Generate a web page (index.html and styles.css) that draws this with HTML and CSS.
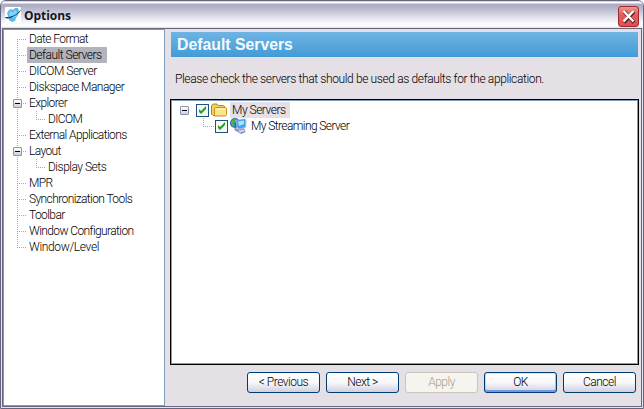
FILE: index.html
```html
<!DOCTYPE html>
<html lang="en">
<head>
<meta charset="utf-8">
<title>Options</title>
<link rel="stylesheet" href="styles.css">
</head>
<body>
<div class="window">
  <header class="titlebar">
    <svg class="logo" width="16" height="16" viewBox="0 0 16 16"><rect width="16" height="16" rx="1" fill="#fff"/><path d="M4 3l2-1 2 1 2-2h3l1 3-1 4-2 3-1 3-3 1-3-2-1-4-1-3z" fill="#59b9ee"/><path d="M5 4l3 2 2-3 2 2-1 5-3 1-4-3z" fill="#83d5fa"/><path d="M0 10c1 3 7 1 11-2 3-2 5-4 5-6-2 4-10 9-14 8-1 0-2 0-2 0z" fill="#15384f"/></svg>
    <h1>Options</h1>
    <button class="close" aria-label="Close"><svg width="21" height="21" viewBox="0 0 21 21"><path d="M6 5.5l10 11M16 5.5l-10 11" stroke="#602027" stroke-width="3.6"/><path d="M5.5 5l10 10.5M15.500 5l-10 10.500" stroke="#fff" stroke-width="2.4"/></svg></button>
  </header>
  <div class="content">
    <ul class="nav">
      <li><span class="tight">Date Format</span></li>
      <li><span class="sel">Default Servers</span></li>
      <li><span>DICOM Server</span></li>
      <li><span>Diskspace Manager</span></li>
      <li><i class="expander"></i><span class="tight">Explorer</span></li>
      <li class="child"><span class="tight">DICOM</span></li>
      <li><span class="tight">External Applications</span></li>
      <li><i class="expander"></i><span class="tight">Layout</span></li>
      <li class="child"><span>Display Sets</span></li>
      <li><span class="tight">MPR</span></li>
      <li><span class="tight">Synchronization Tools</span></li>
      <li><span class="tight">Toolbar</span></li>
      <li><span class="tight">Window Configuration</span></li>
      <li class="last"><span class="loose">Window/Level</span></li>
    </ul>
    <main>
      <h2>Default Servers</h2>
      <p>Please check the servers that should be used as defaults for the application.</p>
      <div class="servers">
        <div class="row root">
          <i class="expander"></i>
          <svg class="check" width="13" height="13" viewBox="0 0 13 13"><rect x=".5" y=".5" width="12" height="12" fill="#f6f6f3" stroke="#1c5180"/><path d="M3 5v3l2 2 5-5V2L5 7z" fill="#21a121"/></svg>
          <svg class="folder" width="16" height="14" viewBox="0 0 16 14"><path d="M.5 11V2.500L2 1h4l1.500 1.500h5L14 4v8.500H2z" fill="#f3cf55" stroke="#b3871c"/><path d="M3.500 12.500v-7l1-1h10l1 1v6l-1 1.500h-11z" fill="#fbe58b" stroke="#bf9224"/><path d="M5 6h9" stroke="#fff8ca"/></svg>
          <span class="label on">My Servers</span>
        </div>
        <div class="row sub">
          <svg class="check" width="13" height="13" viewBox="0 0 13 13"><rect x=".5" y=".5" width="12" height="12" fill="#f6f6f3" stroke="#1c5180"/><path d="M3 5v3l2 2 5-5V2L5 7z" fill="#21a121"/></svg>
          <svg class="net" width="17" height="16" viewBox="0 0 17 16"><circle cx="5" cy="5" r="5" fill="#2763cb"/><path d="M1 3l3-2.500 3 .5-1 3-2 1 1 3-2 1-2-3z" fill="#47b547"/><path d="M4 10.500l2-.5 3 1.500 5-1.500 1.500 3-.5 1.500-4 1.500-6-3.500z" fill="#8c93c0"/><path d="M8 13l6-1.500.5 1.500-4.500 1.500z" fill="#d8dcf0"/><path d="M5.500 2l9-1.500L16.500 2 16 9.500l-7 2-2.500-2z" fill="#a9b3d8"/><path d="M6.500 2.500l8.500-1V9L9 10.500 7.500 9z" fill="#3fa0ee"/><path d="M8 3.500l6-1V6L9 8z" fill="#a4e6ff"/></svg>
          <span class="label tight">My Streaming Server</span>
        </div>
      </div>
      <footer>
        <button>&lt; Previous</button>
        <button>Next &gt;</button>
        <button disabled>Apply</button>
        <button class="default">OK</button>
        <button>Cancel</button>
      </footer>
    </main>
  </div>
</div>
</body>
</html>
```
FILE: styles.css
```css
* { box-sizing: border-box; }
body { margin: 0; background: #fff; font: 300 12px/16px Roboto, "Liberation Sans", sans-serif; letter-spacing: -.5px; color: #000; }
.window { width: 644px; height: 409px; border: 1px solid #64647e; border-radius: 6px 6px 0 0; background: #e5e3ec; padding: 0 1px 1px; overflow: hidden; }
.titlebar { height: 27px; margin: 0 -1px; padding: 0 4px; display: flex; align-items: center; background: linear-gradient(#b5b5c8 0, #fff 1px, #fff 2px, #abaac2 3px, #b2b2c8 6px, #d6d6e3 14px, #f9f9fc 22px, #fff 25px, #dcdce8 27px); }
.logo { margin: 1px 3px 0 0; }
h1 { margin: 3px 0 0; font: bold 12px/16px "Open Sans", "Noto Sans", sans-serif; letter-spacing: -.05px; color: #16161c; }
.close { width: 21px; height: 21px; margin: 3px 0 0 auto; padding: 0; border: 1px solid #a5262b; border-radius: 3px; background: linear-gradient(#eb9a91, #df5f61 40%, #dc5254); overflow: hidden; }
.close svg { display: block; margin: -1px; }
.content { height: 379px; display: flex; border: 1px solid #66667f; background: #e5dfe6; }
.nav { width: 162px; margin: 0; padding: 1px 0 0 10px; border: 1px solid #7f9db9; background: #fff; list-style: none; }
.nav li { position: relative; height: 16px; padding-left: 13px; white-space: nowrap; }
.nav li::before { content: ""; position: absolute; left: 3px; top: 0; width: 1px; height: 16px; background: repeating-linear-gradient(#aaa 0 1px, #fff 1px 2px); }
.nav li:first-child::before { top: 8px; height: 8px; }
.nav li.last::before { height: 9px; }
.nav li::after { content: ""; position: absolute; left: 3px; top: 8px; width: 9px; height: 1px; background: repeating-linear-gradient(90deg, #aaa 0 1px, #fff 1px 2px); }
.nav li.child { padding-left: 32px; }
.nav li.child::after { left: 22px; top: 0; width: 9px; height: 9px; background: repeating-linear-gradient(90deg, #aaa 0 1px, #fff 1px 2px) 0 8px / 9px 1px no-repeat, repeating-linear-gradient(#aaa 0 1px, #fff 1px 2px) 0 0 / 1px 9px no-repeat; }
.nav span { display: inline-block; height: 16px; padding: 0 2px; vertical-align: top; }
.nav .sel { width: 80px; background: #b3b3bc; }
.tight { letter-spacing: -.6px; }
.loose { letter-spacing: -.35px; }
.expander { display: block; width: 9px; height: 9px; border: 1px solid #8793ac; border-radius: 1px; background: linear-gradient(#000, #000) 1px 3px / 5px 1px no-repeat, linear-gradient(#fff, #cfd0dc); }
.nav .expander { position: absolute; z-index: 1; left: -1px; top: 4px; }
main { flex: 1; padding: 3px 2px 0 5px; }
h2 { width: 467px; height: 25px; margin: 0 0 0 1px; padding: 0 6px; background: linear-gradient(#6fb4e2, #429bd7); color: #f3fbff; font: bold 15.8px/25px "Liberation Sans", sans-serif; letter-spacing: 0; }
p { margin: 14px 0 12px 5px; white-space: nowrap; letter-spacing: -.375px; }
.servers { width: 469px; height: 266px; padding: 1px 8px; border: 1px solid #000; outline: 1px solid #7f9db9; outline-offset: -2px; background: #fff; }
.row { height: 16px; display: flex; align-items: center; white-space: nowrap; }
.root { margin-top: 1px; padding-left: 1px; }
.root .expander { margin-right: 7px; }
.folder { margin: 0 3px 0 2px; }
.label { padding: 0 2px; height: 16px; }
.on { width: 60px; background: #e5dfe6; }
.sub { position: relative; padding-left: 36px; }
.sub::before { content: ""; position: absolute; left: 24px; top: 0; width: 11px; height: 9px; background: repeating-linear-gradient(90deg, #aaa 0 1px, #fff 1px 2px) 0 8px / 11px 1px no-repeat, repeating-linear-gradient(#aaa 0 1px, #fff 1px 2px) 0 0 / 1px 9px no-repeat; }
.net { margin: 0 2px; }
footer { display: flex; gap: 6px; margin: 7px 0 0 77px; }
footer button { width: 73px; height: 21px; padding: 0; border: 1px solid #003c74; border-radius: 3px; background: linear-gradient(#fff, #f8f8fb 50%, #d0d0df); font: inherit; line-height: 17px; letter-spacing: inherit; color: #000; }
footer button:disabled { border-color: #c9c7ba; background: #f5f4ef; color: #a3a192; }
footer .default { box-shadow: inset 0 -2px #7a94e8, inset 0 1px #cee7ff, inset 1px 0 #bcd4f6, inset -1px 0 #a6c0f0; }
```
